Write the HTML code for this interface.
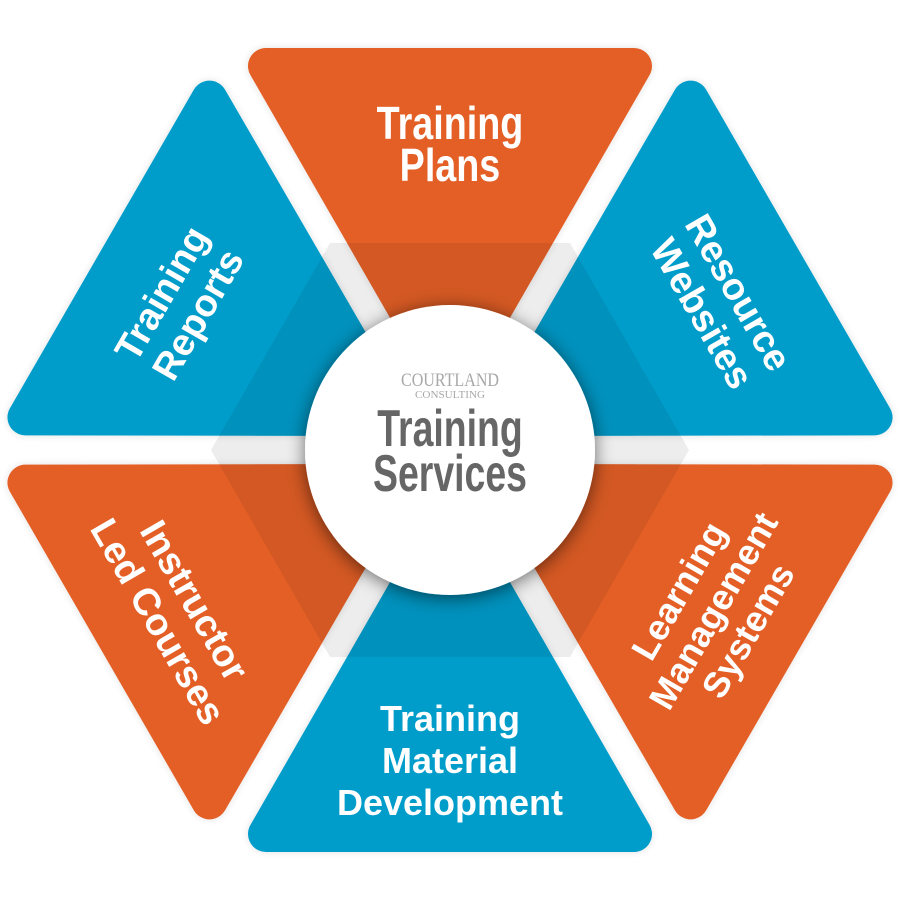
<!DOCTYPE html>
<html><head><meta charset="utf-8"><style>
html,body{margin:0;padding:0;background:#fff;}
svg{display:block}
.t{font-family:"Liberation Sans",Arial,sans-serif;font-weight:bold;fill:#fff;text-anchor:middle}
</style></head><body>
<svg width="900" height="900" viewBox="0 0 900 900" xmlns="http://www.w3.org/2000/svg">
<defs>
<filter id="sh" x="-30%" y="-30%" width="160%" height="160%">
<feGaussianBlur in="SourceAlpha" stdDeviation="9"/>
<feOffset dx="0" dy="3"/>
<feComponentTransfer><feFuncA type="linear" slope="0.55"/></feComponentTransfer>
<feMerge><feMergeNode/><feMergeNode in="SourceGraphic"/></feMerge>
</filter>
<filter id="sh2" x="-10%" y="-10%" width="120%" height="120%">
<feGaussianBlur in="SourceAlpha" stdDeviation="4"/>
<feComponentTransfer><feFuncA type="linear" slope="0.12"/></feComponentTransfer>
<feMerge><feMergeNode/><feMergeNode in="SourceGraphic"/></feMerge>
</filter>
<polygon id="tri" points="-184,-384 184,-384 0,-64" stroke-width="36" stroke-linejoin="round"/>
</defs>
<g transform="translate(450,450)" filter="url(#sh2)">
<use href="#tri" fill="#e35f26" stroke="#e35f26"/>
<use href="#tri" fill="#029dcb" stroke="#029dcb" transform="rotate(60)"/>
<use href="#tri" fill="#e35f26" stroke="#e35f26" transform="rotate(120)"/>
<use href="#tri" fill="#029dcb" stroke="#029dcb" transform="rotate(180)"/>
<use href="#tri" fill="#e35f26" stroke="#e35f26" transform="rotate(240)"/>
<use href="#tri" fill="#029dcb" stroke="#029dcb" transform="rotate(300)"/>
</g>
<polygon points="211,450 330,243 570,243 689,450 570,657 330,657" fill="#000" fill-opacity="0.07"/>
<circle cx="450" cy="450" r="145" fill="#fff" filter="url(#sh)"/>

<g class="t" font-size="46">
<text x="450" y="139" transform="translate(450,0) scale(0.82,1) translate(-450,0)">Training</text>
<text x="450" y="181" transform="translate(450,0) scale(0.82,1) translate(-450,0)">Plans</text>
</g>
<g class="t" font-size="36">
<text x="450" y="731">Training</text>
<text x="450" y="773">Material</text>
<text x="450" y="815">Development</text>
</g>
<g class="t" font-size="38" transform="translate(178,303) rotate(-60)">
<text x="0" y="-6">Training</text>
<text x="0" y="36">Reports</text>
</g>
<g class="t" font-size="38" transform="translate(722,302) rotate(60)">
<text x="0" y="-6">Resource</text>
<text x="0" y="36">Websites</text>
</g>
<g class="t" font-size="38" transform="translate(178,610) rotate(60)">
<text x="0" y="-6">Instructor</text>
<text x="0" y="36">Led Courses</text>
</g>
<g class="t" font-size="36" transform="translate(712,610) rotate(-60)">
<text x="0" y="-26">Learning</text>
<text x="0" y="14">Management</text>
<text x="0" y="54">Systems</text>
</g>

<g text-anchor="middle" fill="#a8a8a8" font-family="Liberation Serif,serif">
<text x="450" y="386" font-size="19" textLength="98" lengthAdjust="spacingAndGlyphs">COURTLAND</text>
<text x="450" y="398" font-size="11" textLength="70" lengthAdjust="spacingAndGlyphs">CONSULTING</text>
</g>
<g font-family="Liberation Sans,Arial,sans-serif" font-weight="bold" fill="#666" text-anchor="middle" font-size="52">
<text x="450" y="446" transform="translate(450,0) scale(0.72,1) translate(-450,0)">Training</text>
<text x="450" y="491" transform="translate(450,0) scale(0.72,1) translate(-450,0)">Services</text>
</g>
</svg>
</body></html>
